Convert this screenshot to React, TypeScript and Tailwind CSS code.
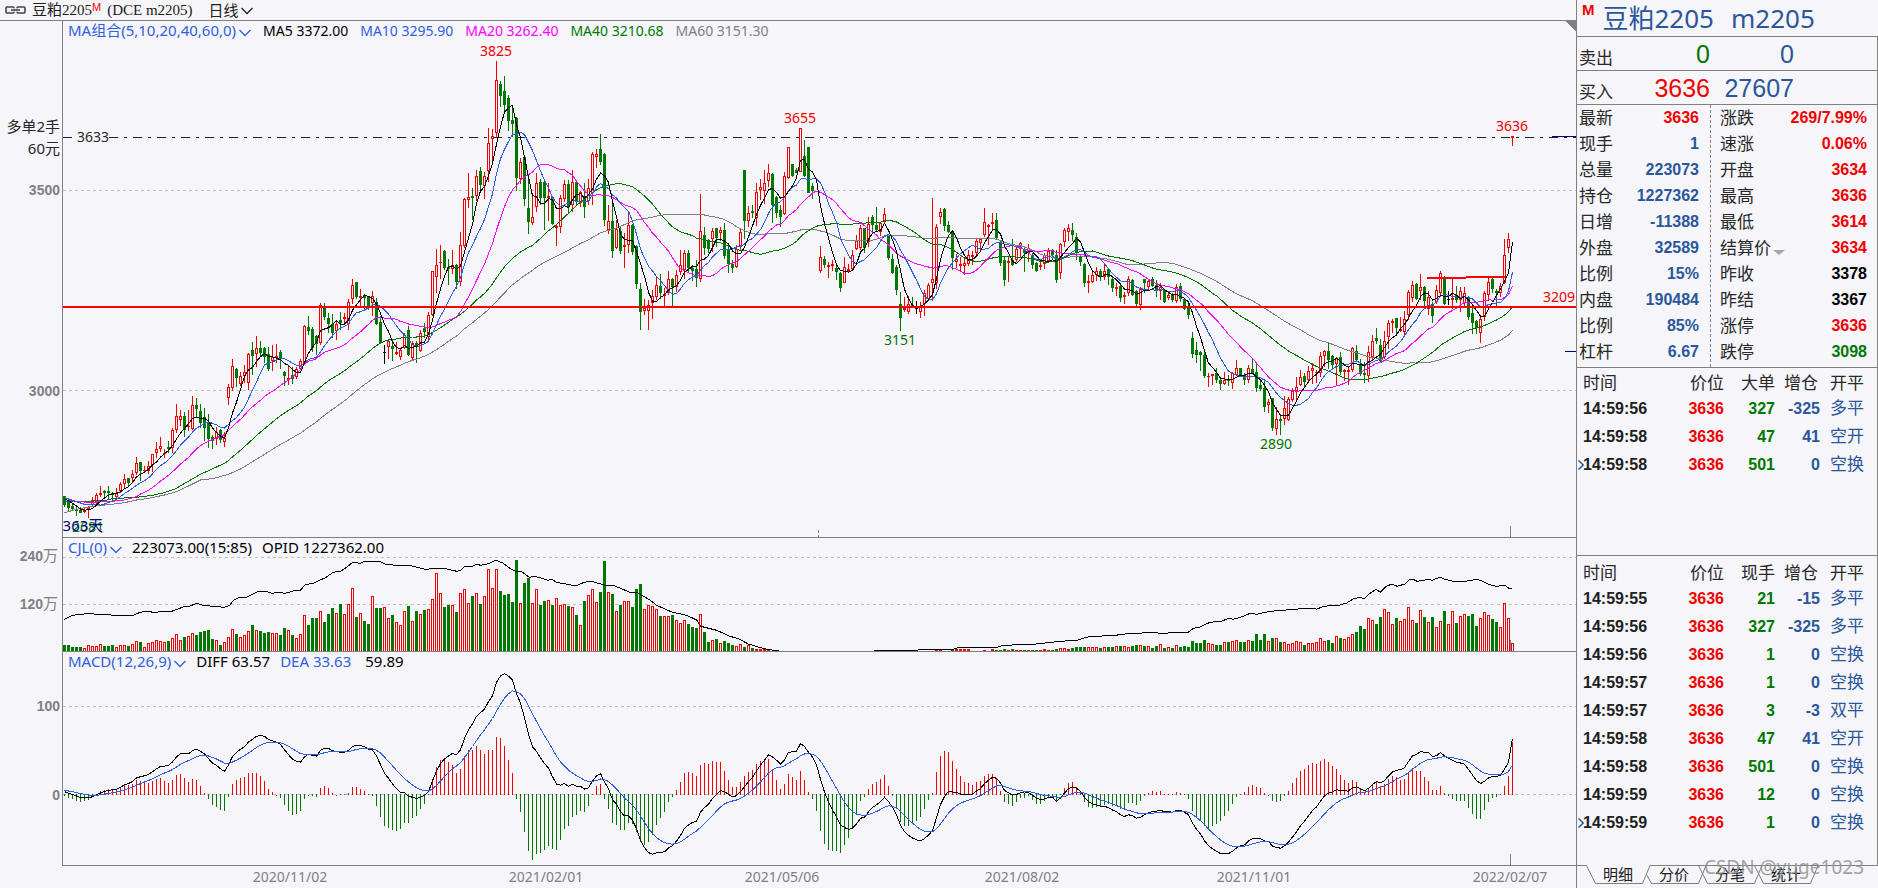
import React from "react";

/* ------------------------------------------------------------------ */
/* Daily bars                                                          */
/* ------------------------------------------------------------------ */

type Tone = "r" | "g" | "k" | "-";
type Candle = { tone: Tone; high: number; top: number; bottom: number; low: number; close: number };

// Each bar is "tone high bodyTop bodyBottom low", in thirds of a chart pixel below the block's origin.
const BLOCKS: { origin: number; bars: string }[] = [
  {
    origin: 270,
    bars: `g678 680 704 710,g686 698 713 727,g702 708 716 724,g708 718 724 737,g712 720 728 728,r715 720 727 730,r708 711 718 745,r682 692 704 710,r669 676 700 704,r648 670 674 680,
g662 664 670 685,g648 663 669 690,g668 671 674 697,r655 670 680 690,r637 643 662 670,r612 627 641 655,g624 625 638 650,r600 614 625 635,r561 580 610 614,g576 576 603 632,
r588 601 604 610,r573 588 603 612,r552 552 585 605,r516 537 550 565,r501 528 538 545,r537 551 553 563,g513 533 538 550,r475 481 533 550,r402 438 481 490,r420 438 450 468,
g426 438 480 502,r420 468 472 482,r378 405 477 480,g384 405 416 440,g402 424 460 475,g414 443 475 513,g432 460 506 535,g495 501 514 538,r471 486 508 525,g477 480 510 518,
r486 504 516 530,r343 352 385 405,r267 290 355 362,g294 297 325 352,r306 320 343 347,r285 307 318 340,r249 253 338 360,g216 240 257 315,r198 235 253 290,g213 235 248 260,
g231 235 260 280,g231 252 297 303,r225 262 274 303,r222 258 264 280,g240 246 268 298,g303 306 318 347,r288 325 329 345,g291 316 326 341,r291 297 320 326,r267 273 297 300,
r165 169 280 283,g138 171 183 194,g171 177 235 245,g195 200 222 254,r99 105 220 224,g100 108 140 150,g129 145 163 190,g133 163 188 203,r153 163 184 210,g126 152 158 180,
r129 141 146 165,r87 97 162 180,r27 45 86 103,g36 36 80 87,r57 78 84 110,g72 76 84 123,g80 83 108 120,r63 78 98 137,g86 97 163 165,g144 156 220 222,
k226 246 248 281,r207 214 232 266,g210 228 236 272,r216 247 251 255,r234 240 261 270,r190 196 235 238,g168 182 256 258,r213 220 263 270,g215 220 232 278,r180 190 242 246,
g159 174 186 204,r126 136 200 212,r3 3 136 138,r-63 -15 22 70`,
  },
  {
    origin: 0,
    bars: `r735 787 790 837,g752 753 803 810,g777 803 808 855,r752 797 808 822,g792 795 845 866,r698 736 845 858,
r594 598 738 745,r519 592 601 624,g564 589 594 660,r510 529 588 604,g501 513 554 573,r516 529 558 598,r384 430 514 546,r387 409 418 488,r183 241 398 415,g243 252 289 320,
g228 273 314 333,g285 294 362 393,g320 360 373 410,g352 354 534 573,r474 487 536 552,g470 472 597 617,g522 625 665 701,r588 652 670 675,r519 549 620 635,g537 546 594 615,
g545 546 594 690,r549 589 593 662,g590 591 672 674,r672 678 685 738,r585 595 680 698,r540 553 596 607,g540 552 620 640,r510 546 616 636,g541 546 607 616,r573 578 608 620,
g549 592 620 654,r537 565 604 615,r456 463 580 615,r447 462 470 504,g404 447 487 495,g461 462 660 678,r615 663 690 702,g609 663 752 774,r660 688 745 748,g683 693 753 762,
r700 735 740 804,r633 676 736 760,g672 676 757 765,g735 738 852 868,g849 867 936 990,r897 924 934 945,r900 915 932 990,r870 890 908 957,r830 856 892 900,g822 858 878 897,
r866 884 888 920,r813 837 880 886,g834 837 860 918,r810 825 862 876,r750 795 815 825,r750 759 810 837,g750 759 803 820,g795 804 812 844,g780 808 834 860,r582 694 836 847,
g681 705 743 765,g717 720 748 760,r684 694 718 755,g684 684 714 742,r681 691 700 723,g670 690 768 777,g740 747 792 820,g780 792 803 818,r735 749 802 803,r685 697 738 754,
g510 510 664 718,r618 640 664 680,g615 633 638 655,r549 577 655 678,r537 562 570 600,r510 550 572 612,r492 520 542 560,g519 522 614 670,g588 591 638 655,g615 630 650 680,
r516 529 643 645,r441 442 535 537,g492 493 527 530,g504 510 518 520,r384 385 515 516,g420 468 527 530,g441 442 578 580,g550 559 573 598,-637 637 637 637,r738 772 812 820,
g768 777 795 804,r786 795 800 835,r780 793 797 812,g790 804 815 840,g816 820 863 876,r771 802 848 850,r792 808 812 820,r750 766 808 812,r705 720 748 750,r677 685 745 750,
g684 684 745 760,r651 673 727 740,g645 652 676 703,g621 675 691 694,r667 670 695 708,r624 643 665 672,g703 705 773 780,g762 777 820 823,g797 802 869 886,g876 912 955 992,
r891 924 930 937,r888 912 937 942,g891 915 920 924,k903 922 924 942`,
  },
  {
    origin: 100,
    bars: `r606 622 637 654,r570 580 612 648,r549 556 597 600,r294 539 550 600,r372 381 550 568,r324 337 352 372,
g324 327 377 392,g363 375 397 400,g393 394 473 510,r462 478 487 505,r471 493 498 512,r476 490 499 525,r450 467 491 497,r453 467 471 495,r414 424 460 467,r417 418 430 448,
r324 367 406 411,r372 375 380 435,r339 367 371 392,g339 360 415 418,g420 427 488 498,g471 480 540 558,r471 484 490 546,g417 480 494 498,r442 448 480 487,r426 430 446 473,
g440 450 458 516,r432 444 460 486,g459 466 495 507,g486 489 513 516,r483 496 502 510,r459 466 492 507,r444 454 482 485,g447 450 466 480,g450 465 540 548,r430 433 520 537,
r384 391 425 440,r372 385 396 424,g369 390 406 424,g399 411 460 480,g465 468 486 498,g489 492 549 561,r525 543 548 579,r513 526 545 550,r501 514 525 542,g507 513 528 544,
r490 514 532 540,g504 508 530 555,g528 537 564 575,r549 561 566 587,g555 558 594 606,r576 586 590 612,r528 538 578 588,g537 540 585 588,g570 573 612 624,r561 569 614 630,
g537 538 550 580,r537 544 560 573,g531 538 557 562,g540 556 574 590,r549 562 574 600,g567 570 605 608,r576 586 595 600,g579 585 600 605,r552 562 604 608,g549 558 598 606,
g594 597 628 630,g603 618 644 656,g697 714 761 773,g726 750 764 788,g753 757 764 812,g753 765 828 833,r819 829 832 861,r822 824 827 855,g805 820 840 850,g834 841 851 870,
r816 840 853 855,g825 837 842 858,r816 820 848 866,r780 804 824 828,g804 805 826 828,g819 826 840 855,r795 805 840 848,g776 807 820 822,g792 816 863 875,g837 855 868 873,
g838 864 920 935,r897 907 916 938,g894 895 985 992,r921 958 988 1004,g942 958 963 1004,r888 925 958 974,r891 898 961 963,r864 874 901 906,r831 862 874 906,r810 832 854 858,
g819 828 845 860,r798 815 841 850,r789 804 812 852,r810 817 820 850,r756 769 818 830,r750 754 768 800,g729 753 780 807,g765 768 795 807,r772 775 792 855,g756 772 815 825,
r807 811 815 843,r803 810 815 854,r741 744 810 815,g735 754 780 786,g777 792 822 828,g786 819 826 849,r738 757 829 846,r705 724 772 780,g684 714 724 732,g717 735 783 785,
r693 724 772 776,r660 670 712 747,r657 664 670 700,g654 656 684 708,r651 688 692 696,r633 658 695 706,r572 577 646 660,r543 556 595 606,g549 552 597 600,r522 562 574 600,
g558 561 602 620,r573 592 628 645,g608 614 647 668,r555 571 606 612,r513 520 578 590,g529 531 613 616,k575 599 601 616,r535 595 600 626,g558 585 600 610,r561 574 600 635,
r561 580 608 618,g588 591 650 660,g621 640 668 702,g660 663 685 702,r648 658 700 728,r573 580 652 662,r534 547 586 602,g534 538 568 580,g567 573 578 620,r549 559 580 590,
r417 466 548 552,r399 418 444 459,r108 109 113 137`,
  },
];

const CANDLES: Candle[] = BLOCKS.flatMap(({ origin, bars }) =>
  bars.split(",").map((raw) => {
    const s = raw.trim();
    const tone = s[0] as Tone;
    const [high, top, bottom, low] = s.slice(1).split(" ").map((v) => origin + Number(v) / 3);
    return { tone, high, top, bottom, low, close: tone === "g" ? bottom : top };
  }),
);

// Bar tops, in thirds of a pixel below y = 530; the base line is 363.
const VOLUME_TOPS: number[] = [
  345, 345, 351, 351, 351, 354, 345, 348, 348, 342, 348, 348, 345, 351, 345, 345, 348, 342, 334, 336,
  351, 339, 337, 330, 334, 336, 334, 324, 312, 330, 321, 318, 309, 315, 306, 303, 300, 327, 330, 345,
  336, 321, 297, 312, 321, 315, 303, 285, 300, 303, 309, 306, 309, 309, 315, 294, 300, 315, 324, 312,
  256, 285, 264, 264, 243, 276, 252, 234, 249, 222, 252, 222, 174, 261, 249, 273, 282, 198, 234, 234,
  231, 264, 255, 276, 286, 243, 228, 273, 243, 252, 240, 237, 207, 129, 189, 231, 225, 225, 246, 189,
  178, 219, 198, 189, 222, 198, 117, 174, 117, 183, 195, 192, 216, 90, 219, 159, 144, 219, 177, 225,
  213, 210, 225, 204, 225, 222, 228, 231, 255, 285, 213, 195, 177, 216, 186, 93, 186, 192, 243, 225,
  213, 213, 231, 177, 162, 237, 225, 228, 237, 258, 258, 258, 255, 270, 279, 270, 282, 291, 294, 252,
  306, 336, 330, 327, 339, 333, 339, 345, 348, 342, 351, 345, 354, 357, 359, 357, 359,
  ...Array<number>(41).fill(363),
  359, 359, 363, 363, 360, 359, 359, 359, 359, 363, 363, 363, 360, 363, 359, 360, 360, 357, 360, 357,
  360, 360, 360, 360, 360, 360, 360, 358, 360, 360, 357, 354, 354, 357, 354, 353, 353, 351, 351, 351,
  351, 354, 351, 351, 351, 348, 348, 348, 351, 348, 345, 345, 348, 348, 354, 348, 342, 354, 351, 354,
  345, 351, 348, 351, 333, 339, 339, 330, 339, 342, 345, 345, 336, 336, 333, 330, 336, 336, 330, 333,
  312, 330, 312, 333, 324, 324, 336, 336, 342, 339, 333, 336, 345, 339, 339, 336, 324, 333, 330, 339,
  318, 324, 327, 321, 312, 306, 288, 297, 264, 270, 282, 261, 237, 246, 282, 264, 273, 267, 231, 270,
  279, 240, 261, 276, 261, 291, 273, 243, 282, 243, 279, 258, 252, 258, 252, 288, 264, 246, 255, 267,
  276, 291, 219, 264, 339,
];

// Open interest, one list per unbroken run: [x origin, "x y x y ..."] in thirds of a pixel.
const OPEN_INTEREST: [number, string][][] = [
  [
    [0, "193 268 217 256 262 251 300 253 345 256 400 256 420 247 445 244 468 249 480 244 515 244 552 230 570 228 590 220 610 226 640 229 672 232 688 227 700 211 715 203 740 202 770 186 795 184 817 190 835 187 855 190 880 183 902 180 915 164 940 160 960 150 975 144 1000 127 1022 124 1045 108 1058 97 1080 100 1095 94 1140 94 1155 102 1205 108 1225 105 1275 118 1315 115 1340 117"],
    [440, "25 118 50 124 62 121 75 109 97 109 110 103 122 106 140 103 168 91 190 100 205 112 230 126 245 125 268 142 285 139 325 151 335 148 350 157 408 168 432 157 455 154 495 166 520 166 570 187 590 187 630 210 650 226 695 246 740 256 770 270 782 289 830 301 870 319 895 326 925 342 955 351 985 359 1017 362"],
  ],
  [
    [860, "42 362 172 362 175 359 280 358 290 354 412 352 430 346 520 343 600 334 650 331 690 319 765 317 780 313 880 307 900 310 985 307 1000 295 1020 291 1050 277 1085 274 1105 265 1120 268 1150 259 1170 250"],
    [1180, "215 250 230 253 270 244 355 237 400 235 410 238 430 229 480 225 500 219 520 207 540 202 553 206 570 190 588 178 601 187 620 168 637 162 651 169 675 162 686 150 698 147 711 154 730 151 745 148 757 151 770 145 782 142 795 148 820 154 855 154 890 148 905 153 925 163 950 169 975 166 987 175 995 175"],
  ],
];

/* ------------------------------------------------------------------ */
/* Indicators                                                          */
/* ------------------------------------------------------------------ */

const PRICE_PER_PX = 2.5;
const MACD_ZERO = 794.5;
const MACD_PX = 0.88;
const barX = (k: number) => 64 + 4 * k;

type Knot = [number, number];

// Before a full window of bars is available the average follows these knots.
const HEADS: Record<number, Knot[]> = {
  5: [[0, 686], [1, 692], [2, 700], [3, 708]],
  10: [[0, 683], [3, 695], [5, 703], [8, 704]],
  20: [[0, 689], [2, 693], [5, 696], [8, 696], [12, 694], [15, 690], [18, 680]],
  40: [[0, 693], [5, 694], [10, 692], [12, 686], [18, 682], [22, 676], [25, 668], [28, 655], [30, 640], [34, 613], [38, 591]],
  60: [[0, 728], [3, 718], [7, 709], [11, 704], [15, 698], [18, 690], [21, 685], [25, 675], [28, 665], [31, 648], [34, 630], [37, 626], [41, 613], [44, 597], [47, 575], [50, 553], [53, 530], [56, 510], [58, 496]],
};

function interpolate(knots: Knot[], k: number): number {
  for (let i = 1; i < knots.length; i++) {
    const [k0, v0] = knots[i - 1];
    const [k1, v1] = knots[i];
    if (k <= k1) return v0 + ((v1 - v0) * (k - k0)) / (k1 - k0);
  }
  return knots[knots.length - 1][1];
}

function movingAverage(n: number): number[] {
  return CANDLES.map((_, k) => {
    if (k < n - 1) return 270 + interpolate(HEADS[n], k) / 3;
    let sum = 0;
    for (let i = k - n + 1; i <= k; i++) sum += CANDLES[i].close;
    return sum / n;
  });
}

function macd() {
  let fast = -(270 + 691 / 3) * PRICE_PER_PX;
  let slow = -(270 + 695 / 3) * PRICE_PER_PX;
  let dea = 4.5;
  return CANDLES.map((c, k) => {
    if (k > 0) {
      const price = -c.close * PRICE_PER_PX;
      fast += (price - fast) * (2 / 13);
      slow += (price - slow) * (2 / 27);
      dea += (fast - slow - dea) * 0.2;
    }
    return { diff: fast - slow, dea };
  });
}

const toPoints = (ys: number[]) => ys.map((y, k) => `${barX(k) + 0.5},${y.toFixed(1)}`).join(" ");

const AVERAGES = [
  { n: 60, color: "#808080" },
  { n: 40, color: "#007800" },
  { n: 20, color: "#ff00ff" },
  { n: 10, color: "#2f5fe0" },
  { n: 5, color: "#000000" },
].map((a) => ({ ...a, points: toPoints(movingAverage(a.n)) }));

const MACD = macd();
const DIFF_POINTS = toPoints(MACD.map((m) => MACD_ZERO - m.diff * MACD_PX));
const DEA_POINTS = toPoints(MACD.map((m) => MACD_ZERO - m.dea * MACD_PX));

const OI_POINTS = OPEN_INTEREST.map((run) =>
  run
    .flatMap(([x0, text]) => {
      const v = text.split(" ").map(Number);
      const out: string[] = [];
      for (let i = 0; i < v.length; i += 2) out.push(`${(x0 + v[i] / 3).toFixed(1)},${(530 + v[i + 1] / 3).toFixed(1)}`);
      return out;
    })
    .join(" "),
);

/* ------------------------------------------------------------------ */
/* Chart building blocks                                               */
/* ------------------------------------------------------------------ */

const PLOT_LEFT = 63;
const PLOT_WIDTH = 1513;
const RED = "#f00000";
const GREEN = "#007800";

type Frame = { top: number; height: number };
const PRICE: Frame = { top: 21, height: 516 };
const VOLUME: Frame = { top: 538, height: 113 };
const OSC: Frame = { top: 652, height: 213 };

const pct = (v: number) => `${v * 100}%`;

function Label({ frame, x, y, className, children }: { frame: Frame; x: number; y: number; className: string; children: React.ReactNode }) {
  return (
    <span
      className={`absolute -translate-x-1/2 -translate-y-1/2 whitespace-nowrap leading-4 ${className}`}
      style={{ left: pct((x - PLOT_LEFT) / PLOT_WIDTH), top: pct((y - frame.top) / frame.height) }}
    >
      {children}
    </span>
  );
}

function AxisLabel({ frame, y, className, children }: { frame: Frame; y: number; className: string; children: React.ReactNode }) {
  return (
    <span
      className={`absolute right-0.5 -translate-y-1/2 whitespace-nowrap leading-4 ${className}`}
      style={{ top: pct((y - frame.top) / frame.height) }}
    >
      {children}
    </span>
  );
}

function Panel({
  frame,
  title,
  axis,
  header,
  labels,
  children,
}: {
  frame: Frame;
  title: string;
  axis: React.ReactNode;
  header: React.ReactNode;
  labels?: React.ReactNode;
  children: React.ReactNode;
}) {
  return (
    <section className="flex min-h-0" aria-label={title}>
      <div className="relative w-[62px] shrink-0">{axis}</div>
      <div className="relative min-w-0 flex-1 border-b border-l border-[#808080]">
        <svg
          className="absolute inset-0 h-full w-full"
          viewBox={`${PLOT_LEFT} ${frame.top} ${PLOT_WIDTH} ${frame.height}`}
          preserveAspectRatio="none"
          shapeRendering="crispEdges"
          fill="none"
          role="img"
          aria-label={title}
        >
          {children}
        </svg>
        {labels}
        <div className="relative flex items-center whitespace-nowrap pl-[5px] leading-[19px]">{header}</div>
      </div>
    </section>
  );
}

function GridLine({ y }: { y: number }) {
  return <line x1={63} x2={1576} y1={y + 0.5} y2={y + 0.5} stroke="#c0c0c0" strokeDasharray="3 3" />;
}

function Chevron({ className }: { className: string }) {
  return (
    <svg className={className} width="12" height="8" viewBox="0 0 12 8" fill="none" stroke="currentColor" strokeWidth="1.3" aria-hidden="true">
      <path d="M0.5 1 L6 6.5 L11.5 1" />
    </svg>
  );
}

function IndicatorButton({ children }: { children: React.ReactNode }) {
  return (
    <button type="button" className="flex items-center gap-[3px] text-[15px] leading-[19px] text-[#315ee0]">
      {children}
      <Chevron className="mt-1" />
    </button>
  );
}

function CandleMark({ c, x }: { c: Candle; x: number }) {
  if (c.tone === "-") return null;
  const high = Math.round(c.high - 0.3);
  const low = Math.round(c.low);
  const top = Math.round(c.top - 0.3);
  const bottom = Math.max(Math.round(c.bottom), top + 1);
  if (c.tone === "r") {
    const thin = bottom - top < 3;
    return (
      <g>
        <path d={`M${x + 0.5} ${high}V${top}M${x + 0.5} ${bottom}V${low}`} stroke={RED} />
        {thin ? (
          <rect x={x - 1} y={top} width={3} height={bottom - top} fill={RED} />
        ) : (
          <rect x={x - 0.5} y={top + 0.5} width={2} height={bottom - top - 1} stroke={RED} />
        )}
      </g>
    );
  }
  const color = c.tone === "g" ? GREEN : "#000000";
  return (
    <g fill={color}>
      <rect x={x} y={high} width={1} height={Math.max(low - high, 1)} />
      <rect x={x - 1} y={top} width={3} height={bottom - top} />
    </g>
  );
}

function PriceChart() {
  const F = PRICE;
  return (
    <Panel
      frame={F}
      title="K线"
      axis={
        <>
          <AxisLabel frame={F} y={126} className="text-[15px] text-[#282828]">多单2手</AxisLabel>
          <AxisLabel frame={F} y={148} className="text-[15px] text-[#282828]">60元</AxisLabel>
          <AxisLabel frame={F} y={190} className="font-['Liberation_Sans',sans-serif] text-sm font-bold text-[#808080]">3500</AxisLabel>
          <AxisLabel frame={F} y={390} className="font-['Liberation_Sans',sans-serif] text-sm font-bold text-[#808080]">3000</AxisLabel>
        </>
      }
      header={
        <div className="flex items-center gap-3 text-sm leading-[19px]">
          <IndicatorButton>MA组合(5,10,20,40,60,0)</IndicatorButton>
          <span className="text-black">MA5 3372.00</span>
          <span className="text-[#315ee0]">MA10 3295.90</span>
          <span className="text-[#ff00ff]">MA20 3262.40</span>
          <span className="text-[#007800]">MA40 3210.68</span>
          <span className="text-[#808080]">MA60 3151.30</span>
        </div>
      }
      labels={
        <>
          <Label frame={F} x={93} y={137} className="text-sm text-[#282828]">3633</Label>
          <Label frame={F} x={496} y={51} className="text-sm text-[#f00000]">3825</Label>
          <Label frame={F} x={800} y={118} className="text-sm text-[#f00000]">3655</Label>
          <Label frame={F} x={900} y={340} className="text-sm text-[#007800]">3151</Label>
          <Label frame={F} x={1276} y={444} className="text-sm text-[#007800]">2890</Label>
          <Label frame={F} x={1512} y={126} className="text-sm text-[#f00000]">3636</Label>
          <Label frame={F} x={1559} y={297} className="text-sm text-[#f00000]">3209</Label>
          <Label frame={F} x={88} y={527} className="text-sm text-[#007800]">2681</Label>
          <Label frame={F} x={83} y={525} className="text-[15px] text-[#000080]">363天</Label>
        </>
      }
    >
      <GridLine y={190} />
      <GridLine y={390} />
      <path d="M63 137.5H72" stroke="#202020" />
      <line x1={109} x2={1576} y1={137.5} y2={137.5} stroke="#202020" strokeDasharray="9 6 3 6" />
      <path d="M1552 136.5H1576M1565 351.5H1576" stroke="#000080" />
      <path d="M818.5 530V537" stroke="#808080" strokeDasharray="3 2" />
      <path d="M1510.5 526V537" stroke="#808080" />
      {CANDLES.map((c, k) => (
        <CandleMark key={k} c={c} x={barX(k)} />
      ))}
      {AVERAGES.map((a) => (
        <polyline key={a.n} points={a.points} stroke={a.color} />
      ))}
      <path d="M62 307H1576M1427 278H1466M1466 277H1506" stroke="#ff0000" strokeWidth={2} />
      <path d="M1566 21H1576V32Z" fill="#808080" />
    </Panel>
  );
}

function VolumeChart() {
  return (
    <Panel
      frame={VOLUME}
      title="成交量"
      axis={
        <>
          <AxisLabel frame={VOLUME} y={556} className="pr-0.5 font-['Liberation_Sans','Noto_Sans_CJK_SC',sans-serif] text-sm font-bold text-[#808080]">
            240<span className="text-[15px] font-normal">万</span>
          </AxisLabel>
          <AxisLabel frame={VOLUME} y={603} className="pr-0.5 font-['Liberation_Sans','Noto_Sans_CJK_SC',sans-serif] text-sm font-bold text-[#808080]">
            120<span className="text-[15px] font-normal">万</span>
          </AxisLabel>
        </>
      }
      header={
        <div className="flex items-center gap-2.5 text-[15px]">
          <IndicatorButton>CJL(0)</IndicatorButton>
          <span className="text-black">223073.00(15:85)</span>
          <span className="text-black">OPID 1227362.00</span>
        </div>
      }
    >
      <GridLine y={557} />
      <GridLine y={604} />
      <path d="M1510.5 640V651" stroke="#808080" />
      {VOLUME_TOPS.map((t, k) => {
        if (t >= 363) return null;
        const x = barX(k);
        const top = Math.round(530 + t / 3 - 0.3);
        const h = 651 - top;
        return CANDLES[k]?.tone === "g" ? (
          <rect key={k} x={x - 1} y={top} width={3} height={h} fill={GREEN} />
        ) : h < 3 ? (
          <rect key={k} x={x - 1} y={top} width={3} height={h} fill={RED} />
        ) : (
          <path key={k} d={`M${x - 0.5} 651V${top + 0.5}H${x + 1.5}V651`} stroke={RED} />
        );
      })}
      {OI_POINTS.map((p) => (
        <polyline key={p.slice(0, 12)} points={p} stroke="#000000" />
      ))}
    </Panel>
  );
}

function MacdChart() {
  return (
    <Panel
      frame={OSC}
      title="MACD"
      axis={
        <>
          <AxisLabel frame={OSC} y={706} className="font-['Liberation_Sans',sans-serif] text-sm font-bold text-[#808080]">100</AxisLabel>
          <AxisLabel frame={OSC} y={794} className="font-['Liberation_Sans',sans-serif] text-sm font-bold text-[#808080]">0</AxisLabel>
        </>
      }
      header={
        <div className="flex items-center gap-2.5 text-[15px]">
          <IndicatorButton>MACD(12,26,9)</IndicatorButton>
          <span className="text-black">DIFF 63.57</span>
          <span className="text-[#315ee0]">DEA 33.63</span>
          <span className="pl-1 text-black">59.89</span>
        </div>
      }
    >
      <GridLine y={706} />
      <GridLine y={794} />
      <path d="M1510.5 854V865" stroke="#808080" />
      {MACD.map((m, k) => {
        const len = Math.round(Math.abs(2 * (m.diff - m.dea)) * MACD_PX);
        const up = m.diff > m.dea;
        return <rect key={k} x={barX(k)} y={up ? 795 - len : 794} width={1} height={Math.max(len, 1)} fill={up ? RED : GREEN} />;
      })}
      <polyline points={DIFF_POINTS} stroke="#000000" />
      <polyline points={DEA_POINTS} stroke="#2f5fe0" />
    </Panel>
  );
}

const DATES: [number, string][] = [
  [290, "2020/11/02"],
  [546, "2021/02/01"],
  [782, "2021/05/06"],
  [1022, "2021/08/02"],
  [1254, "2021/11/01"],
  [1510, "2022/02/07"],
];

function TimeAxis() {
  return (
    <div className="flex h-[22px]">
      <div className="w-[63px] shrink-0" />
      <div className="relative flex-1">
        {DATES.map(([x, d]) => (
          <time
            key={d}
            className="absolute top-px -translate-x-1/2 whitespace-nowrap text-sm leading-5 text-[#808080]"
            style={{ left: pct((x - PLOT_LEFT) / PLOT_WIDTH) }}
          >
            {d}
          </time>
        ))}
      </div>
    </div>
  );
}

/* ------------------------------------------------------------------ */
/* Quote sidebar                                                       */
/* ------------------------------------------------------------------ */

const TONES = {
  red: "text-[#f00000]",
  green: "text-[#007800]",
  blue: "text-[#2b579a]",
  black: "text-black",
};
type ToneName = keyof typeof TONES;

const LEFT_QUOTES: [string, string, ToneName][] = [
  ["最新", "3636", "red"],
  ["现手", "1", "blue"],
  ["总量", "223073", "blue"],
  ["持仓", "1227362", "blue"],
  ["日增", "-11388", "blue"],
  ["外盘", "32589", "blue"],
  ["比例", "15%", "blue"],
  ["内盘", "190484", "blue"],
  ["比例", "85%", "blue"],
  ["杠杆", "6.67", "blue"],
];

const RIGHT_QUOTES: [string, string, ToneName][] = [
  ["涨跌", "269/7.99%", "red"],
  ["速涨", "0.06%", "red"],
  ["开盘", "3634", "red"],
  ["最高", "3636", "red"],
  ["最低", "3614", "red"],
  ["结算价", "3634", "red"],
  ["昨收", "3378", "black"],
  ["昨结", "3367", "black"],
  ["涨停", "3636", "red"],
  ["跌停", "3098", "green"],
];

function QuoteList({ rows, className }: { rows: [string, string, ToneName][]; className: string }) {
  return (
    <dl className={className}>
      {rows.map(([name, value, tone], i) => (
        <div key={i} className="flex h-[26px] items-center justify-between">
          <dt className="text-[17px] leading-6 text-[#282828]">
            {name === "结算价" ? (
              <button type="button" className="flex items-center gap-0.5">
                {name}
                <svg className="mt-2" width="12" height="5" viewBox="0 0 12 5" aria-hidden="true">
                  <path d="M0 0H12L6 5Z" fill="#a8a8a8" />
                </svg>
              </button>
            ) : (
              name
            )}
          </dt>
          <dd className={`font-['Liberation_Sans',sans-serif] text-base font-bold leading-6 ${TONES[tone]}`}>{value}</dd>
        </div>
      ))}
    </dl>
  );
}

function OrderRow({ name, price, volume, tone }: { name: string; price: string; volume: string; tone: ToneName }) {
  return (
    <div className="flex h-[34px] border-b border-[#808080] pl-0.5">
      <span className="w-12 pt-[9px] text-[17px] leading-6 text-[#282828]">{name}</span>
      <span className={`w-[83px] text-right font-['Liberation_Sans',sans-serif] text-[25px] leading-[34px] ${TONES[tone]}`}>{price}</span>
      <span className="w-[84px] text-right font-['Liberation_Sans',sans-serif] text-[25px] leading-[34px] text-[#2b579a]">{volume}</span>
    </div>
  );
}

type Trade = [string, string, string, string];

const BIG_TRADES: Trade[] = [
  ["14:59:56", "327", "-325", "多平"],
  ["14:59:58", "47", "41", "空开"],
  ["14:59:58", "501", "0", "空换"],
];

const TRADES: Trade[] = [
  ["14:59:55", "21", "-15", "多平"],
  ["14:59:56", "327", "-325", "多平"],
  ["14:59:56", "1", "0", "空换"],
  ["14:59:57", "1", "0", "空换"],
  ["14:59:57", "3", "-3", "双平"],
  ["14:59:58", "47", "41", "空开"],
  ["14:59:58", "501", "0", "空换"],
  ["14:59:59", "12", "0", "空换"],
  ["14:59:59", "1", "0", "空换"],
];

function TradeTable({ volumeName, rows }: { volumeName: string; rows: Trade[] }) {
  return (
    <table className="w-full table-fixed border-collapse">
      <colgroup>
        <col className="w-[81px]" />
        <col className="w-[66px]" />
        <col className="w-[51px]" />
        <col className="w-[45px]" />
        <col />
      </colgroup>
      <thead>
        <tr className="h-[25px] text-[17px] leading-6 text-[#282828]">
          <th scope="col" className="p-0 pl-1.5 text-left font-normal">时间</th>
          <th scope="col" className="p-0 text-right font-normal">价位</th>
          <th scope="col" className="p-0 text-right font-normal">{volumeName}</th>
          <th scope="col" className="p-0 pr-0.5 text-right font-normal">增仓</th>
          <th scope="col" className="p-0 pl-2.5 text-left font-normal">开平</th>
        </tr>
      </thead>
      <tbody className="font-['Liberation_Sans','Noto_Sans_CJK_SC',sans-serif] text-base font-bold leading-6">
        {rows.map(([time, volume, change, kind], i) => (
          <tr key={i} className="h-7">
            <td className="relative p-0 pl-1.5 text-[#202020]">
              {i === rows.length - 1 && (
                <svg className="absolute left-px top-[9px]" width="6" height="10" viewBox="0 0 6 10" fill="none" stroke="#2b579a" strokeWidth="1.5" aria-hidden="true">
                  <path d="M0.5 0.5L5.2 5L0.5 9.5" />
                </svg>
              )}
              {time}
            </td>
            <td className="p-0 text-right text-[#f00000]">3636</td>
            <td className="p-0 text-right text-[#007800]">{volume}</td>
            <td className="p-0 text-right text-[#2b579a]">{change}</td>
            <td className="p-0 pl-2.5 text-[17px] font-normal text-[#2b579a]">{kind}</td>
          </tr>
        ))}
      </tbody>
    </table>
  );
}

function SidebarTabs() {
  return (
    <div className="relative h-[23px]">
      <svg className="absolute left-0 top-0" width="301" height="23" viewBox="0 0 301 23" fill="none" stroke="#808080" aria-hidden="true">
        <path d="M0 0.5H9.5L18.5 18.5H65.5L73 0.5H301" />
        <path d="M69.5 9.5L74.5 18.5H121.5L129 0.5" />
        <path d="M121.5 0.5L130.5 18.5H177.5L185 0.5" />
        <path d="M177.5 0.5L186.5 18.5H233.5L241 0.5" />
      </svg>
      <div className="relative flex pl-[13px] text-[15px] text-[#202020]" role="tablist">
        {["明细", "分价", "分笔", "统计"].map((t, i) => (
          <button key={t} type="button" role="tab" aria-selected={i === 0} className="h-[18px] w-14 text-center leading-[18px]">
            {t}
          </button>
        ))}
      </div>
      <span className="absolute -top-3 right-3.5 whitespace-nowrap text-[19px] leading-7 text-[#8c8c8c]/80">CSDN @yuge1023</span>
    </div>
  );
}

function Sidebar() {
  return (
    <aside className="flex w-[302px] shrink-0 flex-col border-l border-[#808080]">
      <header className="flex h-9 gap-2 pl-[5px] text-[#2b579a]">
        <span className="font-['Liberation_Sans',sans-serif] text-[15px] font-bold leading-5 text-[#f00000]">M</span>
        <h1 className="flex gap-[17px] text-[26px] leading-9">
          <span>豆粕2205</span>
          <span>m2205</span>
        </h1>
      </header>
      <div className="flex flex-1 flex-col border-r border-t border-[#808080]">
        <OrderRow name="卖出" price="0" volume="0" tone="green" />
        <OrderRow name="买入" price="3636" volume="27607" tone="red" />
        <div className="flex h-[263px] border-b border-[#808080]">
          <QuoteList rows={LEFT_QUOTES} className="w-[133px] pl-0.5 pr-[11px]" />
          <QuoteList rows={RIGHT_QUOTES} className="flex-1 border-l border-dashed border-[#808080] pl-[9px] pr-2.5" />
        </div>
        <div className="h-[188px] border-b border-[#808080] pt-0.5">
          <TradeTable volumeName="大单" rows={BIG_TRADES} />
        </div>
        <div className="flex-1 pt-1">
          <TradeTable volumeName="现手" rows={TRADES} />
        </div>
      </div>
      <SidebarTabs />
    </aside>
  );
}

/* ------------------------------------------------------------------ */

function Toolbar() {
  return (
    <header className="flex h-[21px] items-center border-b border-[#808080] pl-[5px] text-[15px] leading-5 text-[#202020]">
      <svg className="mr-1.5" width="21" height="8" viewBox="0 0 21 8" fill="none" stroke="#444444" aria-hidden="true">
        <rect x="1" y="1" width="8" height="6" rx="1" strokeWidth="1.6" />
        <rect x="12" y="1" width="8" height="6" rx="1" strokeWidth="1.6" />
        <path d="M6 4H15" stroke="#f5f5fa" strokeWidth="3.4" />
        <path d="M6 4H15" strokeWidth="1.6" />
      </svg>
      <h2 className="flex font-['Liberation_Serif','Noto_Sans_CJK_SC',serif]">
        <span>豆粕2205</span>
        <sup className="top-0 font-['Liberation_Sans',sans-serif] text-[11px] leading-[14px] text-[#f00000]">M</sup>
        <span className="pl-1.5">(DCE m2205)</span>
      </h2>
      <button type="button" className="ml-4 flex items-center gap-0.5">
        日线
        <Chevron className="mt-0.5" />
      </button>
    </header>
  );
}

export default function App() {
  return (
    <div className="flex min-h-screen overflow-hidden bg-[#f5f5fa] font-['Noto_Sans','Noto_Sans_CJK_SC',sans-serif]">
      <main className="flex min-w-0 flex-1 flex-col">
        <Toolbar />
        <div className="grid flex-1 grid-rows-[517fr_114fr_214fr]">
          <PriceChart />
          <VolumeChart />
          <MacdChart />
        </div>
        <TimeAxis />
      </main>
      <Sidebar />
    </div>
  );
}
